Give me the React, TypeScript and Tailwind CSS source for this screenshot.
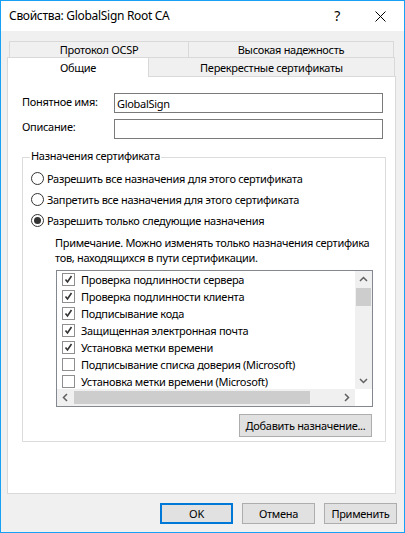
import React from "react";

const purposes = [
  { label: "Проверка подлинности сервера", checked: true },
  { label: "Проверка подлинности клиента", checked: true },
  { label: "Подписывание кода", checked: true },
  { label: "Защищенная электронная почта", checked: true },
  { label: "Установка метки времени", checked: true },
  { label: "Подписывание списка доверия (Microsoft)", checked: false },
  { label: "Установка метки времени (Microsoft)", checked: false },
];

const Radio: React.FC<{ label: string; selected?: boolean }> = ({ label, selected }) => (
  <div className="flex items-center h-[21px]">
    <span className="w-[13px] h-[13px] rounded-full border border-[#333333] bg-white flex items-center justify-center">
      {selected && <span className="w-[7px] h-[7px] rounded-full bg-[#333333]" />}
    </span>
    <span className="ml-[3px]">{label}</span>
  </div>
);

const Check: React.FC<{ checked: boolean }> = ({ checked }) => (
  <span className="w-[13px] h-[13px] border border-[#8f8f8f] bg-white flex items-center justify-center">
    {checked && (
      <svg width="9" height="9" viewBox="0 0 9 9">
        <path d="M1.5 4.5 L3.5 7 L7.5 1" fill="none" stroke="#333" strokeWidth="1.6" />
      </svg>
    )}
  </span>
);

const Chevron: React.FC<{ dir: "up" | "down" | "left" | "right" }> = ({ dir }) => {
  const d = {
    up: "M1 6 L4.5 2.5 L8 6",
    down: "M1 3 L4.5 6.5 L8 3",
    left: "M6 1 L2.5 4.5 L6 8",
    right: "M3 1 L6.5 4.5 L3 8",
  }[dir];
  return (
    <svg width="9" height="9" viewBox="0 0 9 9">
      <path d={d} fill="none" stroke="#606060" strokeWidth="1.5" />
    </svg>
  );
};

const Button: React.FC<{ label: string; primary?: boolean; className?: string }> = ({ label, primary, className }) => (
  <div
    className={
      "h-[21px] bg-[#e1e1e1] flex items-center justify-center whitespace-nowrap " +
      (primary ? "border-2 border-[#0078d7] " : "border border-[#adadad] ") +
      (className ?? "")
    }
  >
    {label}
  </div>
);

export default function App() {
  return (
    <div
      className="w-[405px] h-[533px] border border-[#18a0f5] bg-[#f0f0f0] flex flex-col text-[11px] tracking-[-0.3px] text-black leading-none"
      style={{ fontFamily: '"Noto Sans", "Liberation Sans", sans-serif' }}
    >
      {/* title bar */}
      <div className="h-[30px] bg-white flex items-center shrink-0">
        <span className="ml-[8px] text-[12px]">Свойства: GlobalSign Root CA</span>
        <span className="ml-auto mr-[35px] text-[14px]">?</span>
        <svg width="11" height="11" viewBox="0 0 11 11" className="mr-[18px]">
          <path d="M0.5 0.5 L10.5 10.5 M10.5 0.5 L0.5 10.5" stroke="#000" strokeWidth="1" />
        </svg>
      </div>

      <div className="pl-[6px] pt-[10px] flex flex-col">
        {/* back row of tabs */}
        <div className="flex ml-[2px] w-[385px] h-[16px]">
          <div className="w-[179px] border-t border-l border-[#d9d9d9] flex items-center justify-center">
            Протокол OCSP
          </div>
          <div className="flex-1 border-t border-l border-r border-[#d9d9d9] flex items-center justify-center">
            Высокая надежность
          </div>
        </div>
        {/* front row of tabs */}
        <div className="flex w-[389px] h-[19px] items-end">
          <div className="w-[142px] h-[20px] -mb-px z-10 bg-white border-t border-l border-r border-[#d9d9d9] flex items-center justify-center pb-[1px]">
            Общие
          </div>
          <div className="w-[246px] h-[19px] border-t border-r border-[#d9d9d9] flex items-center justify-center pt-[1px]">
            Перекрестные сертификаты
          </div>
        </div>

        {/* tab panel */}
        <div className="w-[389px] h-[418px] bg-white border border-[#d9d9d9] flex flex-col">
          <div className="flex items-center mt-[16px] h-[20px]">
            <span className="ml-[14px] w-[92px] -mt-[3px]">Понятное имя:</span>
            <div className="w-[269px] h-[20px] border border-[#7a7a7a] flex items-center pl-[2px]">GlobalSign</div>
          </div>
          <div className="flex items-center mt-[6px] h-[20px]">
            <span className="ml-[14px] w-[92px] -mt-[6px]">Описание:</span>
            <div className="w-[269px] h-[20px] border border-[#7a7a7a]" />
          </div>

          {/* group box */}
          <div className="relative ml-[14px] mt-[18px] w-[364px] h-[285px] border border-[#dcdcdc] flex flex-col">
            <span className="absolute -top-[8px] left-[7px] bg-white px-[1px]">Назначения сертификата</span>
            <div className="ml-[8px] mt-[10px] flex flex-col">
              <Radio label="Разрешить все назначения для этого сертификата" />
              <Radio label="Запретить все назначения для этого сертификата" />
              <Radio label="Разрешить только следующие назначения" selected />
            </div>
            <div className="ml-[32px] mt-[4px] leading-[15px] whitespace-nowrap">
              <div>Примечание. Можно изменять только назначения сертифика</div>
              <div>тов, находящихся в пути сертификации.</div>
            </div>

            {/* list box */}
            <div className="ml-[33px] mt-[5px] w-[317px] h-[137px] border border-[#828790] flex flex-col">
              <div className="flex flex-1 min-h-0">
                <div className="flex-1 overflow-hidden">
                  {purposes.map((p) => (
                    <div key={p.label} className="h-[17px] flex items-center whitespace-nowrap">
                      <span className="ml-[5px]">
                        <Check checked={p.checked} />
                      </span>
                      <span className="ml-[6px]">{p.label}</span>
                    </div>
                  ))}
                </div>
                <div className="w-[17px] bg-[#f0f0f0] flex flex-col items-center">
                  <div className="h-[17px] flex items-center justify-center">
                    <Chevron dir="up" />
                  </div>
                  <div className="w-[15px] h-[18px] bg-[#cdcdcd]" />
                  <div className="flex-1" />
                  <div className="h-[17px] flex items-center justify-center">
                    <Chevron dir="down" />
                  </div>
                </div>
              </div>
              <div className="h-[17px] flex">
                <div className="flex-1 bg-[#f0f0f0] flex items-center">
                  <div className="w-[17px] flex items-center justify-center">
                    <Chevron dir="left" />
                  </div>
                  <div className="w-[236px] h-[13px] bg-[#cdcdcd]" />
                  <div className="flex-1" />
                  <div className="w-[17px] flex items-center justify-center">
                    <Chevron dir="right" />
                  </div>
                </div>
                <div className="w-[17px] bg-white" />
              </div>
            </div>

            <div className="flex justify-end mt-[7px] mr-[13px]">
              <Button label="Добавить назначение..." className="w-[133px] h-[23px]" />
            </div>
          </div>
        </div>

        {/* dialog buttons */}
        <div className="flex justify-end gap-[9px] mt-[9px] mr-[7px]">
          <Button label="OK" primary className="w-[73px]" />
          <Button label="Отмена" className="w-[73px]" />
          <Button label="Применить" className="w-[73px]" />
        </div>
      </div>
    </div>
  );
}
